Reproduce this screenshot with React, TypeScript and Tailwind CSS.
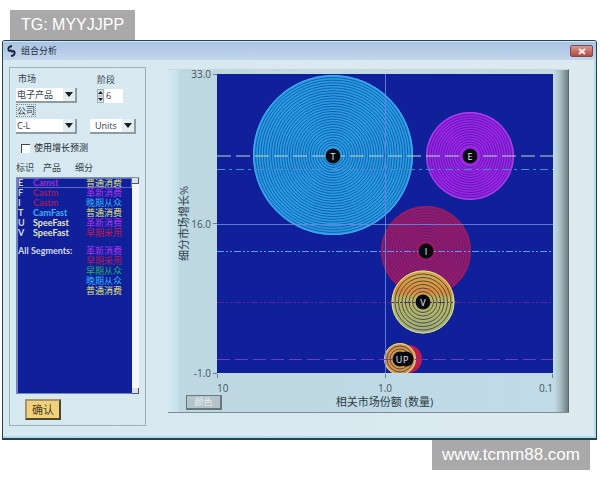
import React from "react";

const CJK = "font-['Open_Sans','Noto_Sans_CJK_SC',sans-serif]";

type Row = {
  id?: string;
  product?: string;
  productColor?: string;
  segment: string;
  segmentColor: string;
};

const products: Row[] = [
  { id: "E", product: "Camst", productColor: "text-[#a02ad8]", segment: "普通消费", segmentColor: "text-[#e2e676]" },
  { id: "F", product: "Castm", productColor: "text-[#9c1a66]", segment: "革新消费", segmentColor: "text-[#b630ee]" },
  { id: "I", product: "Castm", productColor: "text-[#9c1a66]", segment: "晚期从众", segmentColor: "text-[#35b4f4]" },
  { id: "T", product: "CamFast", productColor: "text-[#3cb0f6]", segment: "普通消费", segmentColor: "text-[#e2e676]" },
  { id: "U", product: "SpeeFast", productColor: "text-[#e4e8c4]", segment: "革新消费", segmentColor: "text-[#b630ee]" },
  { id: "V", product: "SpeeFast", productColor: "text-[#e4e8c4]", segment: "早期采用", segmentColor: "text-[#c01a50]" },
];

const segments: Row[] = [
  { segment: "革新消费", segmentColor: "text-[#b630ee]" },
  { segment: "早期采用", segmentColor: "text-[#b01a58]" },
  { segment: "早期从众", segmentColor: "text-[#22b060]" },
  { segment: "晚期从众", segmentColor: "text-[#35b4f4]" },
  { segment: "普通消费", segmentColor: "text-[#e2e676]" },
];

function Picker({ id, label, options, className }: { id: string; label?: string; options: string[]; className: string }) {
  return (
    <div className={`relative h-[15px] border-r-2 border-b-2 border-[#8d9ba3] bg-white ${className}`}>
      <select id={id} aria-label={label} className="block h-[13px] w-full appearance-none bg-transparent pl-[1px] text-[9px] leading-[13px] text-[#34424c] outline-none">
        {options.map((o) => (
          <option key={o}>{o}</option>
        ))}
      </select>
      <span className="pointer-events-none absolute inset-y-0 right-0 flex w-[12px] items-center justify-center bg-[#e4edf0]">
        <svg width="8" height="6" viewBox="0 0 8 6">
          <path d="M0 0H8L4 5Z" fill="#152029" />
        </svg>
      </span>
    </div>
  );
}

function Bubble({ x, y, r, step, fill, ring, edge }: {
  x: number; y: number; r: number; step: number; fill: string; ring: string; edge: string;
}) {
  const rings: number[] = [];
  for (let n = r - step; n > 9; n -= step) rings.push(n);
  return (
    <g fill="none">
      <circle cx={x} cy={y} r={r} fill={fill} />
      {rings.map((n) => (
        <circle key={n} cx={x} cy={y} r={n} stroke={ring} strokeWidth="1" />
      ))}
      <circle cx={x} cy={y} r={r - 0.5} stroke={edge} strokeWidth="1" />
    </g>
  );
}

function Core({ x, y, label, shift = 0 }: { x: number; y: number; label: string; shift?: number }) {
  return (
    <g>
      <circle cx={x} cy={y} r="7.5" fill="#080a12" />
      <text x={x + shift} y={y + 3.5} textAnchor="middle" fontSize="9" fill="#e6eef2">{label}</text>
    </g>
  );
}

function Plot() {
  return (
    <svg viewBox="0 0 336 299" className="block h-auto w-full overflow-visible bg-[#10209a]" role="img" aria-label="组合分析">
      <defs>
        <clipPath id="plot-area">
          <rect width="336" height="299" />
        </clipPath>
        <linearGradient id="v-fill" x1="0" y1="0" x2="0" y2="1">
          <stop offset="0" stopColor="#d8b048" />
          <stop offset="0.34" stopColor="#e08a38" />
          <stop offset="0.46" stopColor="#b8bc60" />
          <stop offset="1" stopColor="#a0ac7a" />
        </linearGradient>
      </defs>
      <g clipPath="url(#plot-area)">
        <Bubble x={116} y={81} r={80} step={2.6} fill="#2a9ce4" ring="#1060b0" edge="#4aa8ee" />
        <Bubble x={253} y={82} r={44} step={2.5} fill="#a024e4" ring="#5a1ab8" edge="#a848e4" />
        <Bubble x={209} y={177} r={45} step={2.8} fill="#961a64" ring="#641c80" edge="#981c62" />
        <Bubble x={206} y={228} r={31.5} step={3.5} fill="url(#v-fill)" ring="#4c4c50" edge="#d8dc9c" />
        <circle cx="191" cy="285" r="14" fill="#c01c4c" />
        <Bubble x={183} y={285} r={16} step={3} fill="#d09848" ring="#6a4440" edge="#d8dc9c" />
      </g>
      <g fill="none" strokeWidth="1">
        <path d="M0 150.500H336M168.500 0V299" stroke="#6b8ae2" strokeOpacity="0.85" />
        <path d="M0 82H336" stroke="#b8dcc8" strokeDasharray="14 5" />
        <path d="M0 95.500H336" stroke="#4a8cc8" strokeDasharray="8 4 3 4" />
        <path d="M0 177.500H336" stroke="#5a9cf0" strokeDasharray="7 2 2 2 2 2" />
        <path d="M0 228.500H336" stroke="#6c1c88" strokeDasharray="7 2 2 2 2 2" />
        <path d="M0 285.500H336" stroke="#7c34c4" strokeDasharray="13 5" />
        <path d="M0.500 300V304M168.500 300V304M335.500 300V304" stroke="#6c8490" />
      </g>
      <Core x={116} y={82} label="T" />
      <Core x={253} y={82} label="E" />
      <Core x={209} y={177} label="I" />
      <Core x={206} y={228} label="V" />
      <circle cx="189" cy="285" r="7.5" fill="#080a12" />
      <Core x={183} y={285} label="U" shift={-1} />
      <text x="186" y="288.500" fontSize="9" fill="#e6eef2">P</text>
    </svg>
  );
}

function ControlPanel() {
  return (
    <section className="flex w-[137px] shrink-0 flex-col border border-[#9fb0b9] px-[6px] pt-[5px] pb-[5px] text-[9px] leading-[12px] text-[#34424c]">
      <div className="flex justify-between pr-[3px]">
        <div className="w-[61px]">
          <label htmlFor="market" className="block pl-[2px]">市场</label>
          <Picker id="market" className="mt-[3px]" options={["电子产品"]} />
          <label htmlFor="company" className="mt-[1px] block w-fit border border-dotted border-[#7d8a92] leading-[11px]">公司</label>
          <Picker id="company" className="mt-[2px]" options={["C-L"]} />
        </div>
        <div className="flex w-[46px] flex-col justify-between">
          <div className="pl-[7px]">
            <label htmlFor="period" className="block pt-[1px]">阶段</label>
            <div className="mt-[3px] flex h-[14px]">
              <svg width="7" height="14" viewBox="0 0 7 14" className="bg-[#dfe6ea]">
                <path d="M0.500 0.500H6.500V13.500H0.500ZM0.500 7H6.500" fill="none" stroke="#a0abb2" />
                <path d="M1 5H6L3.500 2ZM1 9H6L3.500 12Z" fill="#152029" />
              </svg>
              <input id="period" defaultValue="6" className="w-[19px] bg-white pl-[2px] text-[9px] outline-none" />
            </div>
          </div>
          <Picker id="units" label="Units" className="pl-[4px]" options={["Units"]} />
        </div>
      </div>
      <label className="mt-[8px] flex items-center gap-[4px] pl-[5px] text-[#1c2830]">
        <input type="checkbox" className="h-[9px] w-[9px] appearance-none border-t border-l border-[#3e4a52] bg-white checked:bg-[#3e4a52]" />
        使用增长预测
      </label>
      <div className="mt-[8px] flex">
        <span className="w-[27px]">标识</span>
        <span className="w-[32px]">产品</span>
        <span>细分</span>
      </div>
      <div className="mt-[3px] flex h-[217px] border-t border-[#8292a8]">
        <div className="flex-1 border-b border-l-2 border-[#7484c0] bg-[#10209a]">
          <table className="w-full table-fixed border-collapse text-[9px] leading-[10px] font-bold text-[#d4dcf2]">
            <colgroup>
              <col className="w-[15px]" />
              <col className="w-[53px]" />
              <col />
            </colgroup>
            <tbody className="font-['Lato','Noto_Sans_CJK_SC',sans-serif]">
              {products.map((r, i) => (
                <tr key={r.id} className={i === 0 ? "outline outline-1 -outline-offset-1 outline-[#5a6cc8]" : ""}>
                  <td className="h-[10px] p-0">{r.id}</td>
                  <td className={`p-0 ${r.productColor}`}>{r.product}</td>
                  <td className={`p-0 font-normal whitespace-nowrap ${r.segmentColor}`}>{r.segment}</td>
                </tr>
              ))}
              <tr>
                <td className="h-[8px] p-0" colSpan={3}></td>
              </tr>
              {segments.map((r, i) => (
                <tr key={r.segment}>
                  <td colSpan={2} className="h-[10px] p-0 whitespace-nowrap">{i === 0 ? "All Segments:" : ""}</td>
                  <td className={`p-0 font-normal whitespace-nowrap ${r.segmentColor}`}>{r.segment}</td>
                </tr>
              ))}
            </tbody>
          </table>
        </div>
        <div className="flex w-[7px] flex-col justify-between bg-[#f4f7fa]">
          <span className="h-[6px] border-r border-b border-[#4a5560] bg-[#d9e0e5]" />
          <span className="h-[6px] border-r border-b border-[#4a5560] bg-[#d9e0e5]" />
        </div>
      </div>
      <button className="mt-[5px] ml-[9px] h-[21px] w-[36px] border-2 border-t-[#a89468] border-l-[#a89468] border-r-[#4e4630] border-b-[#4e4630] bg-[#f0d27c] text-[11px] leading-[16px] text-[#4a401e]">
        确认
      </button>
    </section>
  );
}

function ChartPanel() {
  return (
    <section className="mt-[2px] min-w-0 flex-1 self-start border-t border-r border-b border-t-[#c8d6dc] border-r-[#56686e] border-b-[#7c8c94] bg-[linear-gradient(to_right,#d2eaf0_0,#c9e4ec_8px,#bed8e2_12px,#c1dbe6_calc(100%-14px),#a9c0c6_calc(100%-8px),#6d8184_100%)] text-[10px] leading-[10px] text-[#40545e]">
      <div className="flex pt-[4px] pr-[15px]">
        <div className="flex w-[49px] shrink-0">
          <div className="flex flex-1 items-center justify-end">
            <span className="rotate-180 text-[11px] leading-[14px] text-[#2c3e48] [text-orientation:sideways] [writing-mode:vertical-rl]">细分市场增长%</span>
          </div>
          <div className="-my-[5px] flex w-[26px] flex-col justify-between">
            {["33.0", "16.0", "-1.0"].map((v) => (
              <div key={v} className="flex items-center justify-end gap-[2px]">
                {v}
                <span className="h-px w-[4px] bg-[#6c8490]" />
              </div>
            ))}
          </div>
        </div>
        <div className="min-w-0 flex-1">
          <Plot />
        </div>
      </div>
      <div className="mt-[10px] grid grid-cols-3 pr-[15px] pl-[49px]">
        <span>10</span>
        <span className="text-center">1.0</span>
        <span className="text-right">0.1</span>
      </div>
      <div className="mt-[1px] flex items-center pr-[21px] pb-[2px] pl-[18px]">
        <button className="h-[15px] w-[36px] border border-r-2 border-b-2 border-[#66787e] bg-[#b4c4cb] text-[9px] leading-[12px] text-[#e6eef0]">颜色</button>
        <span className="flex-1 text-center text-[11px] leading-[16px] text-[#2c3e48]">相关市场份额 (数量)</span>
      </div>
    </section>
  );
}

export default function App() {
  return (
    <div className={`flex flex-col bg-white ${CJK}`}>
      <div className="mt-[10px] ml-[10px] flex h-[30px] w-fit items-center bg-[#a9a9a9] px-[11px] font-['Liberation_Sans',sans-serif] text-[16px] text-white">
        TG: MYYJJPP
      </div>
      <main className="mr-[3px] ml-[2px] rounded-t-[3px] border border-b-2 border-[#1f4254] bg-[linear-gradient(to_right,#d6e8f0,#dde9f1)]">
        <header className="flex h-[19px] items-center rounded-t-[2px] border-t border-[#dbe8f4] bg-[linear-gradient(to_bottom,#a9c3e2,#c3d6ec)] pr-[3px] pl-[4px]">
          <svg width="9" height="12" viewBox="0 0 9 12" fill="none" stroke="#16263a" strokeWidth="2">
            <path d="M5 1C2 1.500 1 3 1.500 5C2 6.500 4 6.500 4 4.500M4 11C7 10.500 8 9 7.500 7C7 5.500 5 5.500 5 7.500" />
          </svg>
          <h1 className="ml-[5px] flex-1 text-[9px] leading-[14px] text-[#1a2c40]">组合分析</h1>
          <button aria-label="关闭" className="flex h-[12px] w-[23px] items-center justify-center rounded-[2px] border border-[#7c4a4e] bg-[linear-gradient(to_bottom,#d49a90,#b8483e)]">
            <svg width="8" height="7" viewBox="0 0 8 7">
              <path d="M1 1L7 6M7 1L1 6" stroke="#f6eeee" strokeWidth="2" />
            </svg>
          </button>
        </header>
        <div className="flex gap-[22px] border-r-2 border-b-2 border-[#b2dcea] pt-[7px] pr-[25px] pb-[10px] pl-[6px]">
          <ControlPanel />
          <ChartPanel />
        </div>
      </main>
      <div className="mr-[10px] flex h-[30px] w-fit items-center self-end bg-[#a9a9a9] px-[10px] font-['Liberation_Sans',sans-serif] text-[17px] text-white">
        www.tcmm88.com
      </div>
    </div>
  );
}
